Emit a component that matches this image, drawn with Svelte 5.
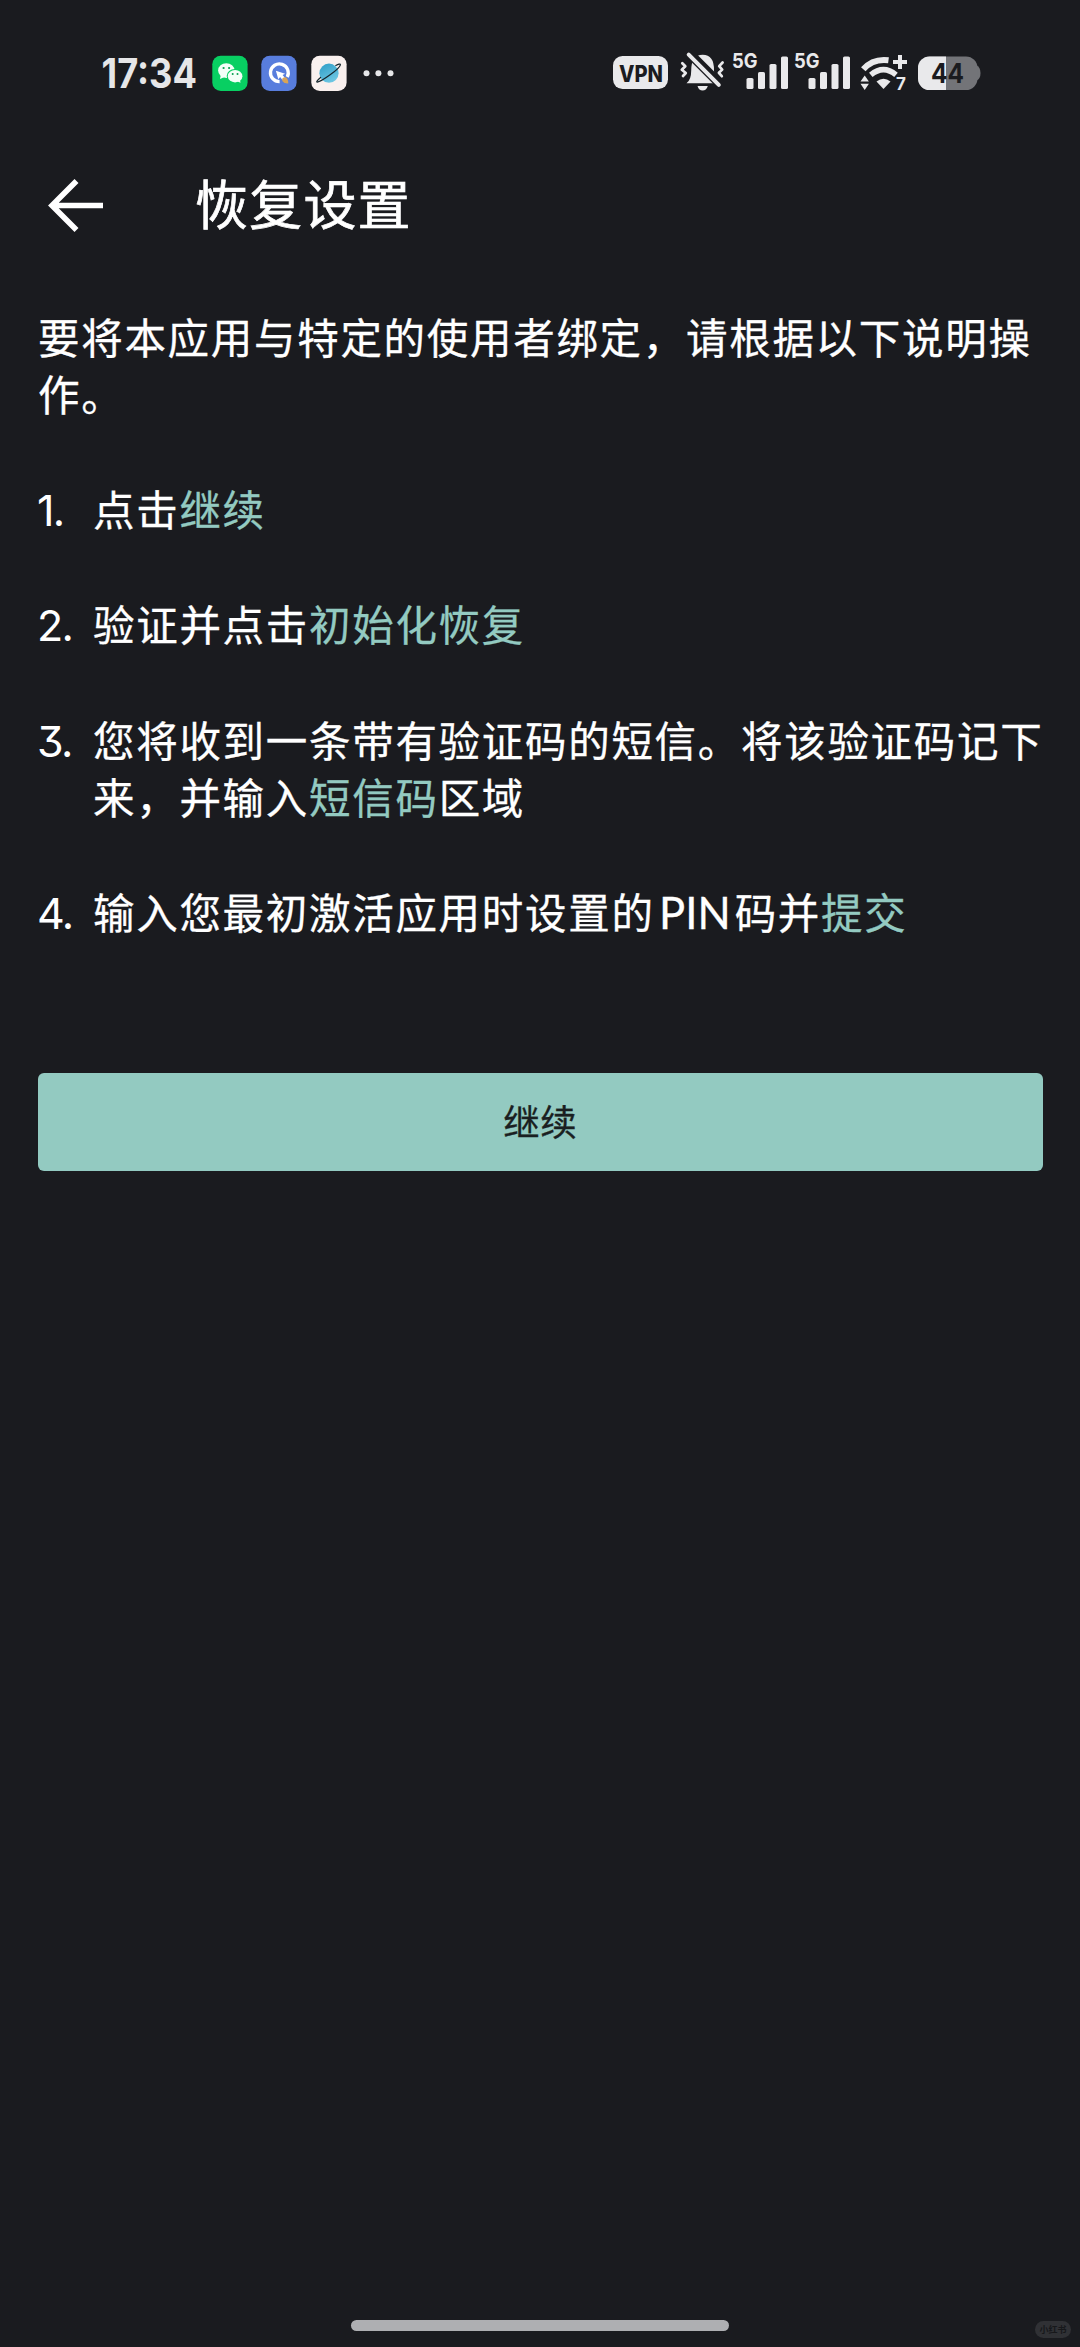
<script>
  const steps = [
    [{ text: '点击' }, { text: '继续', accent: true }],
    [{ text: '验证并点击' }, { text: '初始化恢复', accent: true }],
    [
      { text: '您将收到一条带有验证码的短信。将该验证码记下来，并输入' },
      { text: '短信码', accent: true },
      { text: '区域' }
    ],
    [
      { text: '输入您最初激活应用时设置的' },
      { text: 'PIN', latin: true },
      { text: '码并' },
      { text: '提交', accent: true }
    ]
  ];
</script>

{#snippet signal()}
  <svg class="signal" width="57" height="46" viewBox="731 50 57 46">
    <text class="network" x="731" y="67.5" textLength="25.5" lengthAdjust="spacingAndGlyphs">5G</text>
    <rect x="745.5" y="78" width="7" height="11" rx="1.6" />
    <rect x="757" y="72" width="7" height="17" rx="1.6" />
    <rect x="768.5" y="64" width="7" height="25" rx="1.6" />
    <rect x="780" y="56.5" width="7" height="32.5" rx="1.6" />
  </svg>
{/snippet}

<div class="screen">
  <div class="status">
    <div class="group">
      <svg width="100" height="46" viewBox="98 50 100 46">
        <text class="clock" x="101.5" y="87.8" textLength="95.5" lengthAdjust="spacingAndGlyphs">17:34</text>
      </svg>
      <svg class="app" width="36" height="46" viewBox="211.7 50 36 46">
        <rect x="212" y="55.7" width="35.3" height="35.3" rx="8.5" fill="#08cf62" />
        <g fill="#f4fff8">
          <ellipse cx="226" cy="70.6" rx="8.2" ry="7.4" />
          <path d="M220.5 75l-.8 4 4.6-2z" />
        </g>
        <ellipse cx="234.6" cy="76" rx="8.2" ry="7" fill="#08cf62" />
        <g fill="#f4fff8">
          <ellipse cx="234.8" cy="76.2" rx="7.3" ry="6.2" />
          <path d="M236 81l4.2 1.8-.6-3.8z" />
        </g>
        <g fill="#08a050">
          <circle cx="223.3" cy="68" r="1.1" /><circle cx="228.8" cy="68" r="1.1" />
          <circle cx="232.4" cy="74" r="1" /><circle cx="237.2" cy="74" r="1" />
        </g>
      </svg>
      <svg class="app" width="36" height="46" viewBox="261.7 50 36 46">
        <rect x="262" y="55.7" width="35.3" height="35.3" rx="8.5" fill="#587ddd" />
        <path d="M280.3 81.7A8.9 8.9 0 1 1 287.9 77" fill="none" stroke="#fff" stroke-width="3.3" />
        <path d="M276.6 70.7l9.2 3-2.5 1.4 2.4 3-2.5 2-2.4-3-1.8 2.2z" fill="#fff" />
        <path d="M283 78.6q3-2.6 5 .2 1.1 2 1 4.8-2.6-.3-4.6-1.4-2.2-1.4-1.4-3.6z" fill="#d9a456" />
      </svg>
      <svg class="app" width="36" height="46" viewBox="311 50 36 46">
        <defs>
          <linearGradient id="planet" x1="0" y1="0" x2="0.5" y2="1">
            <stop offset="0" stop-color="#2d9cc6" /><stop offset="1" stop-color="#6cc6e2" />
          </linearGradient>
        </defs>
        <rect x="311.3" y="55.7" width="35.3" height="35.3" rx="8.5" fill="#f9f0ee" />
        <circle cx="329" cy="73.2" r="9.6" fill="url(#planet)" />
        <path d="M320.6 77.5C316.8 80.6 316 82.3 317.3 82.2C321.5 81.5 339.5 69 340.4 64.8C340.3 63.5 338.3 64 335.8 65.4" fill="none" stroke="#15262d" stroke-width="1.2" stroke-linecap="round" />
      </svg>
      <svg class="more" width="32" height="46" viewBox="363 50 32 46">
        <g fill="#e6e6e8"><circle cx="366.5" cy="73.2" r="3" /><circle cx="378.4" cy="73.2" r="3" /><circle cx="390.5" cy="73.2" r="3" /></g>
      </svg>
    </div>

    <div class="group light">
      <svg width="56" height="46" viewBox="613 50 56 46">
        <rect x="613" y="56" width="55" height="33" rx="9.5" />
        <text class="vpn" x="619" y="81.5" textLength="44" lengthAdjust="spacingAndGlyphs">VPN</text>
      </svg>
      <svg class="bell" width="46" height="46" viewBox="680 50 46 46">
        <path d="M686.5 83.3q4.7-3.5 4.7-12.5 0-16 11.5-16t11.3 15.5q0 10 4.6 13z" />
        <path d="M697.5 86h10.3q-1.5 4.5-5.2 4.5t-5.1-4.5z" />
        <path d="M687.5 51.5L720 84" stroke="#1a1b1f" stroke-width="9.5" />
        <path d="M688.7 54.7L718.8 84.8" class="line" stroke-width="4" stroke-linecap="round" />
        <path d="M682.3 63.3l3 3-3.5 3.5 4 3.2-2.8 3M722.6 62.5l-3.4 3.7 3 3.4-3.3 3.2 2.9 3.4" class="line" stroke-width="2.7" stroke-linecap="round" stroke-linejoin="round" />
      </svg>
      {@render signal()}
      {@render signal()}
      <svg class="wifi" width="48" height="46" viewBox="860 50 48 46">
        <path d="M863.3 69.3Q873 58.3 888.5 60.3" class="line" stroke-width="6" />
        <path d="M870.8 74.8Q883.5 64.3 896 74.8" class="line" stroke-width="5.5" />
        <path d="M876.5 81.5q7-5.3 14 0l-7 7.5z" />
        <path d="M900 55v14M893 62h14" class="line" stroke-width="4" />
        <path d="M860.5 81.5l4.2-6 4.2 6zM860.5 83.8h8.4l-4.2 6.2z" />
        <text class="seven" x="896" y="90">7</text>
      </svg>
      <svg class="battery" width="63" height="46" viewBox="917.5 50 63 46">
        <defs><clipPath id="charge"><rect x="917" y="50" width="28.5" height="46" /></clipPath></defs>
        <path d="M972 65.5h4q4 1.5 4 7.5t-4 7.5h-4z" fill="#737478" />
        <rect x="917.5" y="56.5" width="59.5" height="33.5" rx="11.5" fill="#737478" />
        <rect x="917.5" y="56.5" width="59.5" height="33.5" rx="11.5" clip-path="url(#charge)" />
        <text class="level" x="930.5" y="83" textLength="33" lengthAdjust="spacingAndGlyphs">44</text>
      </svg>
    </div>
  </div>

  <header>
    <svg width="56" height="56" viewBox="0 0 56 56">
      <path d="M55 28.5H4M28.5 4L4 28.5L28.5 53" fill="none" stroke="#fff" stroke-width="5.6" />
    </svg>
    <h1>恢复设置</h1>
  </header>

  <main>
    <p>要将本应用与特定的使用者绑定，请根据以下说明操作。</p>
    <ol>
      {#each steps as parts, i}
        <li>
          <span class="number">{i + 1}.</span>
          <div class="body">{#each parts as part}<span class:accent={part.accent} class:latin={part.latin}>{part.text}</span>{/each}</div>
        </li>
      {/each}
    </ol>
    <button>继续</button>
  </main>

  <footer>
    <div class="handle"></div>
    <div class="mark">小红书</div>
  </footer>
</div>

<style>
  :global(body) {
    background: #1a1b1f;
  }
  .screen {
    box-sizing: border-box;
    width: 1080px;
    height: 2347px;
    padding-top: 50px;
    display: flex;
    flex-direction: column;
    background: #1a1b1f;
    color: #fff;
    font-family: 'Noto Sans CJK SC', sans-serif;
    overflow: hidden;
  }
  svg {
    display: block;
    flex: none;
    overflow: visible;
  }
  .status {
    display: flex;
    justify-content: space-between;
    height: 46px;
    padding: 0 99.5px 0 98px;
  }
  .group {
    display: flex;
  }
  .app {
    margin-left: 13.7px;
  }
  .more {
    margin-left: 16px;
  }
  .light {
    fill: #e9e9eb;
  }
  .line {
    fill: none;
    stroke: #e9e9eb;
  }
  .bell {
    margin-left: 11px;
  }
  .signal {
    margin-left: 5.5px;
  }
  .wifi {
    margin-left: 9px;
  }
  .battery {
    margin-left: 9.5px;
  }
  .clock {
    font: 650 40.5px Inter, sans-serif;
    fill: #e6e6e8;
  }
  .network {
    font: 700 20px Inter, sans-serif;
  }
  .vpn {
    font: 800 23px Inter, sans-serif;
    fill: #1a1b1f;
  }
  .seven {
    font: 700 17px Inter, sans-serif;
  }
  .level {
    font: 700 27.5px Inter, sans-serif;
    fill: #1a1b1f;
  }
  header {
    display: flex;
    align-items: center;
    gap: 91px;
    height: 78px;
    margin-top: 70px;
    padding-left: 48px;
  }
  h1 {
    margin: 0;
    padding-bottom: 6px;
    font-size: 53px;
    font-weight: 400;
    line-height: 72px;
    letter-spacing: 1.2px;
    -webkit-text-stroke: 0.7px currentColor;
  }
  main {
    display: flex;
    flex-direction: column;
    padding: 63.5px 37.5px 0 38px;
    font-size: 41.5px;
    line-height: 57.6px;
    letter-spacing: 1.7px;
    -webkit-text-stroke: 0.3px currentColor;
  }
  p {
    margin: 0 -6px 57.6px 0;
  }
  ol {
    display: flex;
    flex-direction: column;
    gap: 57.6px;
    margin: 0;
    padding: 0;
    list-style: none;
  }
  li {
    display: flex;
    align-items: baseline;
    margin: 0 -6px 0 -1px;
  }
  .number {
    flex: none;
    width: 56px;
    font-family: Inter, sans-serif;
    font-size: 43px;
    font-feature-settings: 'cv09';
    line-height: 1;
    letter-spacing: -1.7px;
    -webkit-text-stroke: 0;
  }
  .body {
    flex: 1;
  }
  .accent {
    color: #93cac1;
  }
  .latin {
    margin: 0 4px 0 4.5px;
    font-family: Lato, sans-serif;
    font-size: 43.5px;
    line-height: 1;
    letter-spacing: 0;
  }
  button {
    height: 98px;
    margin-top: 131.7px;
    padding: 0 0 3px;
    border: 0;
    border-radius: 6px;
    background: #93cac1;
    color: #1a1f21;
    font: 400 36.5px/95px 'Noto Sans CJK SC', sans-serif;
    letter-spacing: 0.5px;
  }
  footer {
    display: grid;
    grid-template-columns: 1fr 378px 1fr;
    align-items: start;
    height: 27px;
    margin-top: auto;
  }
  .handle {
    grid-column: 2;
    height: 11px;
    border-radius: 6px;
    background: #aeafb2;
  }
  .mark {
    justify-self: end;
    width: 36px;
    height: 17px;
    margin: 1px 9px 0 0;
    border-radius: 9px;
    background: #303135;
    color: #17181b;
    font-size: 9px;
    font-weight: 700;
    line-height: 17px;
    text-align: center;
  }
</style>
